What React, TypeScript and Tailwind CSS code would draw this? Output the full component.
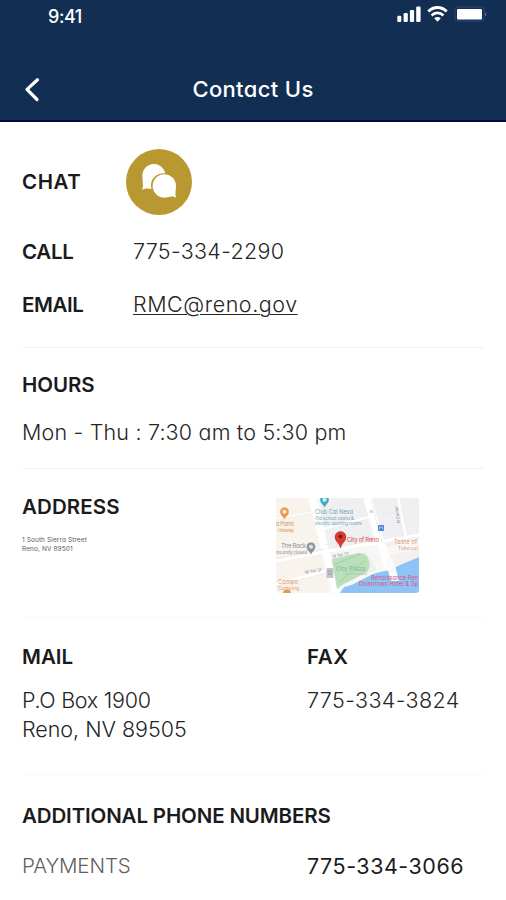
import type { ReactNode } from "react";

const StatusIcons = () => (
  <div className="flex items-start">
    <svg className="w-[90px] h-[18px]" viewBox="0 0 90 18" fill="none">
      <rect x="0.3" y="10.8" width="4" height="6.2" rx="1.2" fill="#fff" />
      <rect x="6.6" y="8" width="4.2" height="9" rx="1.2" fill="#fff" />
      <rect x="12.9" y="5" width="4.2" height="12" rx="1.2" fill="#fff" />
      <rect x="19.2" y="1.6" width="4.4" height="15.4" rx="1.2" fill="#fff" />
      <g stroke="#fff" strokeWidth="2.8">
        <path d="M31.3 6.4C36.6 1.2 44.4 1.2 49.7 6.4" />
        <path d="M34.6 10.4C38 7.1 43 7.1 46.4 10.4" />
      </g>
      <path d="M37.2 13.2C39 11.5 42 11.5 43.8 13.2L40.5 16.7Z" fill="#fff" />
      <rect x="57.8" y="2" width="29.4" height="14" rx="3" stroke="#30496a" strokeWidth="1" />
      <rect x="60" y="4" width="25" height="10.4" rx="1" fill="#fff" />
      <path d="M88.4 7V11.5C89.8 10.6 89.8 8 88.4 7Z" fill="#647b96" />
    </svg>
  </div>
);

const Pin = ({ x, y, color }: { x: number; y: number; color: string }) => (
  <g transform={`translate(${x} ${y})`}>
    <path d="M0 7C-1 3.5-4.5 2.5-4.5-1.2A4.5 4.5 0 0 1 4.5-1.2C4.5 2.5 1 3.5 0 7Z" fill={color} />
    <circle cy="-1.2" r="2" fill="#fff" opacity="0.75" />
  </g>
);

const AddressMap = () => (
  <svg className="w-[143px] h-[95px] rounded-[3px]" viewBox="0 0 143 95" fontSize="5.5">
    <rect width="143" height="95" fill="#f8f7f6" />
    <path d="M0 0H34L53 95H0Z" fill="#f8f4ed" />
    <path d="M43 0H90L97 43L53 53Z" fill="#f0f0f2" />
    <path d="M96 0H143V42L108 49Z" fill="#f0f0f3" />
    <path d="M54 62L90 54L101 72L65 85Z" fill="#eeeff1" />
    <path d="M112 58L143 51V60L116 70Z" fill="#f3f1ef" />
    <g stroke="#fff" fill="none">
      <path d="M36 0L60 95" strokeWidth="7" />
      <path d="M91 0L115 77" strokeWidth="8" />
      <path d="M0 63L52 53L143 37" strokeWidth="3" />
      <path d="M0 86L54 72" strokeWidth="3" />
      <path d="M0 21L40 14M122 0L131 45M43 32L97 18" strokeWidth="2" />
    </g>
    <g stroke="#eae8e6" strokeWidth="0.7" fill="none">
      <path d="M0 22L38 15M0 61L49 51M0 88L58 73M95 2L106 45M118 0L127 41M103 18L126 12M59 8L88 3M48 47L94 38" />
    </g>
    <path d="M64 95L68 89C82 87 91 75 110 73L143 59V95Z" fill="#8fc2f5" />
    <path d="M109 62L117 60L123 83H115Z" fill="#fafafb" />
    <path d="M56 61L82 55C92 54 97 66 91 74L66 87L61 91Z" fill="#b9dfbb" />
    <path d="M57 67L84 56M63 84L90 62M67 76H91" stroke="#a0cba5" strokeWidth="0.8" fill="none" />
    <g stroke="#fff" strokeWidth="0.3">
      <Pin x={8.5} y={15} color="#e89b42" />
      <Pin x={48.5} y={3} color="#42a9bd" />
      <Pin x={35} y={50} color="#899097" />
    </g>
    <path d="M7 95a4 3.5 0 0 1 8 0Z" fill="#e79a4c" />
    <rect x="102" y="27" width="6" height="6" rx="1" fill="#477dde" />
    <path d="M103.5 31.5V29H106.5V31.5" stroke="#fff" strokeWidth="0.6" fill="none" />
    <rect x="50.5" y="70" width="7" height="10" rx="1" fill="#c2c4c7" />
    <path d="M52 73H56M52 76H56" stroke="#8f9296" strokeWidth="0.8" />
    <path d="M64.5 50C63.5 45 59 43.5 59 39A5.5 5.5 0 0 1 70 39C70 43.5 65.5 45 64.5 50Z" fill="#dc382d" stroke="#b32b25" strokeWidth="0.5" />
    <circle cx="64.5" cy="38.5" r="2" fill="#7d1d1b" />
    <g fill="#d9925c">
      <text x="0" y="28" textLength="18">a Pams</text>
      <text x="2" y="34" fontSize="4.5" textLength="16">University</text>
      <text x="2" y="86" textLength="20">Campo</text>
      <text x="2" y="92" fontSize="4.5" textLength="21">Camping</text>
      <text x="118" y="46" textLength="23">Taste of</text>
      <text x="122" y="52" fontSize="4.5" textLength="20">Takeout</text>
    </g>
    <g fill="#6ba3ad">
      <text x="39" y="16" textLength="38">Club Cal Neva</text>
      <text x="39" y="21.5" fontSize="4.5" textLength="39">Old school casino &amp;</text>
      <text x="39" y="27" fontSize="4.5" textLength="47">electric sporting rooms</text>
    </g>
    <g fill="#8b8e92">
      <text x="5" y="50" fontSize="6" textLength="25">The Rack</text>
      <text x="0" y="56" fontSize="4.5" textLength="31">recently closed</text>
      <text x="29" y="76" fontSize="4.5" transform="rotate(-10 29 76)">W 1st St</text>
      <text x="57" y="60" fontSize="4.5" transform="rotate(-12 57 60)">N 1st St</text>
      <text x="94" y="15" fontSize="3.5">N</text>
      <text x="124" y="25" fontSize="4" transform="rotate(-98 124 25)">N Center</text>
    </g>
    <text x="60" y="73" fill="#7fb186" textLength="29">City Plaza</text>
    <text x="71" y="44" fill="#d94b50" fontSize="6" textLength="32">City of Reno</text>
    <g fill="#d4567b">
      <text x="95" y="82" textLength="47">Renaissance Ren</text>
      <text x="83" y="88" textLength="59">Downtown Hotel &amp; Sp</text>
    </g>
  </svg>
);

const Label = ({ children, spacing }: { children: ReactNode; spacing: string }) => (
  <h2 className={`text-[20.5px] leading-[30px] font-semibold text-[#1b1b1c] whitespace-nowrap ${spacing}`}>
    {children}
  </h2>
);

const valueClass = "text-[21.5px] leading-[29px] font-light text-[#252526] whitespace-nowrap";

const App = () => {
  return (
    <div className="w-[506px] h-[900px] overflow-hidden bg-white font-['Inter','Liberation_Sans',sans-serif] [font-feature-settings:'cv11']">
      <header className="h-[122px] bg-[#122f53] border-b-2 border-[#08083f] text-white">
        <div className="flex justify-between h-[66px] pl-12 pr-[19px] pt-[5px]">
          <span className="text-[18px] leading-6 font-medium tracking-[-0.45px]">9:41</span>
          <StatusIcons />
        </div>
        <div className="grid grid-cols-[80px_1fr_80px] items-center h-[46px]">
          <svg className="w-5 h-7 ml-[22px]" viewBox="0 0 20 28" fill="none">
            <path d="M15.5 4.8L5 14.4L15 24.5" stroke="#fff" strokeWidth="3.2" strokeLinecap="round" strokeLinejoin="round" />
          </svg>
          <h1 className="text-center text-[22px] leading-[30px] font-medium tracking-[0.35px]">Contact Us</h1>
        </div>
      </header>

      <main className="pl-[22px] pr-[21px]">
        <section className="h-[226px] pt-[26px] border-b border-[#f3f3f3]">
          <div className="flex items-center h-[68px]">
            <div className="w-[104px]"><Label spacing="tracking-[0.6px]">CHAT</Label></div>
            <div className="flex items-center justify-center w-[66px] h-[66px] rounded-full bg-[#b99731]">
              <svg className="w-9 h-9" viewBox="0 0 36 36">
                <path d="M1 25.8C2.6 23 1.5 18 1.5 14A11.6 11.6 0 0 1 24.3 9.3C14 8.5 8 17 10.5 25C7 24.5 5 24 1 25.8Z" fill="#fff" />
                <path d="M35.3 33.7C33.5 30.5 35 26 35 22A11.7 11.7 0 1 0 26.5 33.2C30 32.2 32 32 35.3 33.7Z" fill="#fff" />
              </svg>
            </div>
          </div>
          <div className="flex items-center h-[30px] mt-[21px]">
            <div className="w-[111px]"><Label spacing="tracking-[-0.3px]">CALL</Label></div>
            <span className={`${valueClass} pb-px tracking-[0.3px]`}>775-334-2290</span>
          </div>
          <div className="flex items-center h-[30px] mt-[23px]">
            <div className="w-[111px]"><Label spacing="tracking-[-0.4px]">EMAIL</Label></div>
            <a className={`${valueClass} pb-px tracking-[0.55px] underline decoration-1 underline-offset-2`}>RMC@reno.gov</a>
          </div>
        </section>

        <section className="h-[121px] pt-[22px] border-b border-[#f3f3f3]">
          <Label spacing="tracking-[-0.05px]">HOURS</Label>
          <p className={`${valueClass} mt-[18px] tracking-[0.18px]`}>Mon - Thu : 7:30 am to 5:30 pm</p>
        </section>

        <section className="flex h-[149px] pt-[23px] border-b border-[#fafafa]">
          <div className="w-[254px]">
            <Label spacing="tracking-[0.1px]">ADDRESS</Label>
            <p className="mt-[14px] text-[6.5px] leading-[9px] tracking-[0.1px] text-[#5b5b5f]">
              1 South Sierra Street<br />Reno, NV 89501
            </p>
          </div>
          <div className="pt-[6px]"><AddressMap /></div>
        </section>

        <section className="grid grid-cols-[285px_1fr] h-[157px] pt-6 border-b border-[#fafafa]">
          <div>
            <Label spacing="tracking-[0px]">MAIL</Label>
            <p className={`${valueClass} mt-[14px]`}>
              <span className="tracking-[-0.27px]">P.O Box 1900</span><br />
              <span className="tracking-[-0.03px]">Reno, NV 89505</span>
            </p>
          </div>
          <div>
            <Label spacing="tracking-[0.6px]">FAX</Label>
            <p className={`${valueClass} mt-[14px] tracking-[0.38px]`}>775-334-3824</p>
          </div>
        </section>

        <section className="pt-[26px]">
          <Label spacing="tracking-[-0.14px]">ADDITIONAL PHONE NUMBERS</Label>
          <div className="grid grid-cols-[285px_1fr] mt-5">
            <span className="text-[20.5px] leading-[30px] font-light tracking-[-0.1px] text-[#606062]">PAYMENTS</span>
            <span className="text-[21.5px] leading-[30px] tracking-[0.52px] text-[#1c1c1d]">775-334-3066</span>
          </div>
        </section>
      </main>
    </div>
  );
};

export default App;
